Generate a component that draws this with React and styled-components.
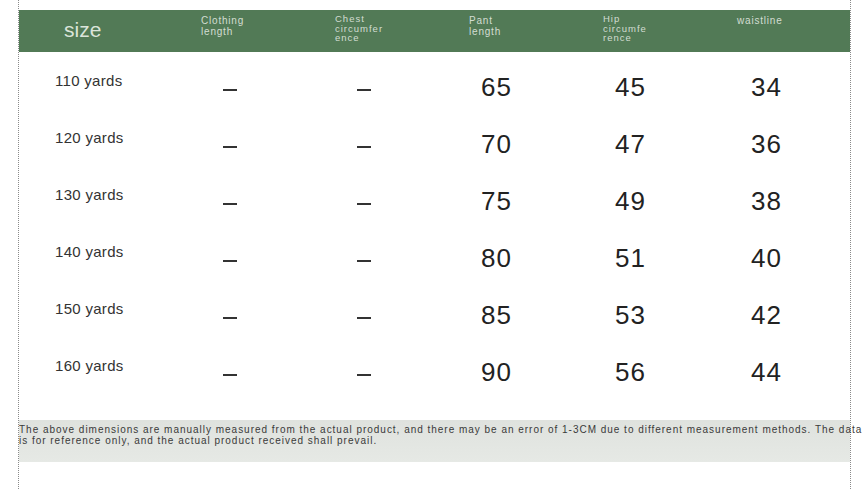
import React from "react";
import styled, { createGlobalStyle } from "styled-components";

const GlobalStyle = createGlobalStyle`
  html, body {
    margin: 0;
    padding: 0;
    background: #fff;
    font-family: "Liberation Sans", Arial, sans-serif;
  }
`;

const rows = [
  { size: "110 yards", pant: 65, hip: 45, waist: 34 },
  { size: "120 yards", pant: 70, hip: 47, waist: 36 },
  { size: "130 yards", pant: 75, hip: 49, waist: 38 },
  { size: "140 yards", pant: 80, hip: 51, waist: 40 },
  { size: "150 yards", pant: 85, hip: 53, waist: 42 },
  { size: "160 yards", pant: 90, hip: 56, waist: 44 },
];

const SizeChart = () => (
  <Sheet>
    <Header>
      <SizeHead>size</SizeHead>
      <HeadCell>Clothing<br />length</HeadCell>
      <HeadCell $tight>Chest<br />circumfer<br />ence</HeadCell>
      <HeadCell>Pant<br />length</HeadCell>
      <HeadCell $tight>Hip<br />circumfe<br />rence</HeadCell>
      <HeadCell>waistline</HeadCell>
    </Header>

    <Body>
      {rows.map((row) => (
        <Row key={row.size}>
          <SizeLabel>{row.size}</SizeLabel>
          <Dash />
          <Dash />
          <Value>{row.pant}</Value>
          <Value>{row.hip}</Value>
          <Value $pad={44}>{row.waist}</Value>
        </Row>
      ))}
    </Body>

    <Note>
      <NoteText>
        The above dimensions are manually measured from the actual product, and there may be an error of 1-3CM due to different measurement methods. The data
        <br />
        is for reference only, and the actual product received shall prevail.
      </NoteText>
    </Note>
  </Sheet>
);

const columns = "152px 134px 134px 134px 134px 1fr";

const Sheet = styled.div`
  margin-left: 18px;
  width: 833px;
  height: 489px;
  border-left: 1px dotted #8a8a8a;
  border-right: 1px dotted #8a8a8a;
  box-sizing: border-box;
  padding-top: 10px;
`;

const Header = styled.div`
  display: grid;
  grid-template-columns: ${columns};
  height: 42px;
  background: #527a56;
  color: #d3ddd2;
`;

const SizeHead = styled.div`
  padding-left: 45px;
  font-size: 21px;
  line-height: 40px;
  color: #dbe4da;
`;

const HeadCell = styled.div`
  padding-left: 30px;
  padding-top: ${({ $tight }) => ($tight ? "4px" : "5px")};
  font-size: ${({ $tight }) => ($tight ? "9.5px" : "10px")};
  line-height: ${({ $tight }) => ($tight ? "9.5px" : "11px")};
  letter-spacing: ${({ $tight }) => ($tight ? "1px" : "0.8px")};
`;

const Body = styled.div`
  padding-top: 4px;
`;

const Row = styled.div`
  display: grid;
  grid-template-columns: ${columns};
  height: 57px;
  align-items: center;
`;

const SizeLabel = styled.div`
  padding-left: 36px;
  font-size: 15px;
  letter-spacing: 0.3px;
  color: #333;
  align-self: start;
  padding-top: 16px;
`;

const Dash = styled.div`
  margin-left: 52px;
  width: 14px;
  height: 2px;
  background: #333;
  margin-top: 10px;
`;

const Value = styled.div`
  padding-left: ${({ $pad }) => $pad ?? 42}px;
  font-size: 26px;
  letter-spacing: 1px;
  color: #222;
  padding-top: 6px;
`;

const Note = styled.div`
  margin-top: 22px;
  height: 42px;
  background: linear-gradient(#dfe2de, #e6e9e5);
  padding-top: 4px;
  box-sizing: border-box;
`;

const NoteText = styled.div`
  font-size: 10px;
  line-height: 11px;
  color: #3a3a3a;
  white-space: nowrap;
  letter-spacing: 0.98px;
`;

export default function App() {
  return (
    <>
      <GlobalStyle />
      <SizeChart />
    </>
  );
}
